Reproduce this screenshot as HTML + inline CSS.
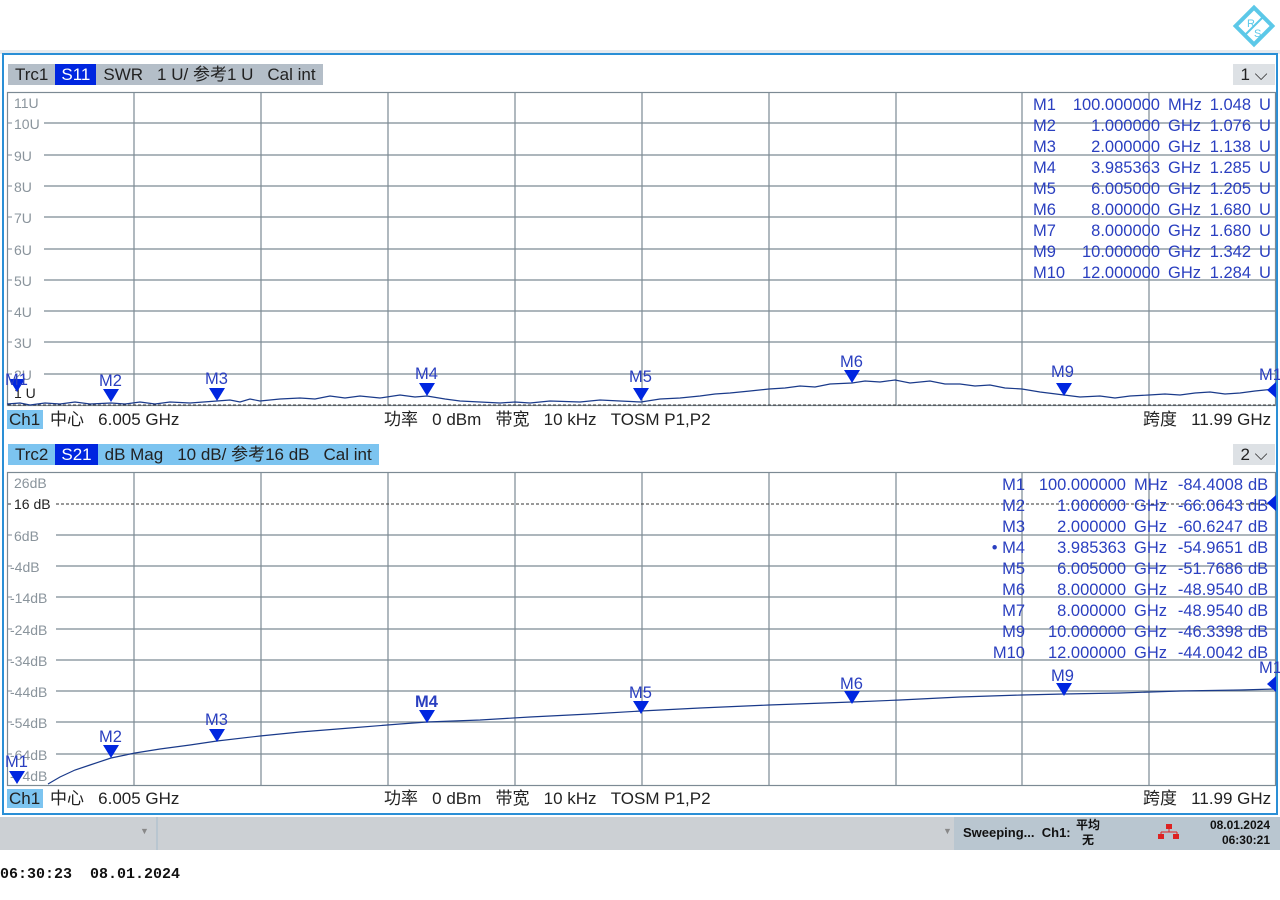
<!DOCTYPE html>
<html><head><meta charset="utf-8"><style>
body{margin:0;width:1280px;height:900px;background:#fff;font-family:"Liberation Sans","Noto Sans CJK SC",sans-serif;overflow:hidden;position:relative}
.a{position:absolute;white-space:nowrap}
.hdr{position:absolute;height:21px;font-size:17px;line-height:21px;color:#222}
.hdr span{display:inline-block;padding:0 7px}
.ch{position:absolute;left:7px;width:1268px;height:23px;font-size:17px;line-height:23px;color:#222}
.t{position:absolute;font-size:16.5px;color:#2a3fc0;line-height:21px;white-space:nowrap}
.r{text-align:right}
</style></head><body>
<svg class="a" style="left:1232px;top:4px" width="44" height="44" viewBox="0 0 44 44">
<rect x="9" y="9" width="26" height="26" transform="rotate(45 22 22)" fill="none" stroke="#5cc8e8" stroke-width="4"/>
<line x1="13" y1="31" x2="31" y2="13" stroke="#5cc8e8" stroke-width="2"/>
<text x="15" y="23" font-size="11" fill="#5cc8e8" font-family="Liberation Sans">R</text>
<text x="22" y="33" font-size="11" fill="#5cc8e8" font-family="Liberation Sans">S</text>
</svg>
<div class="a" style="left:0;top:50px;width:1280px;height:4px;background:#e6eaee"></div>
<div class="a" style="left:2px;top:53px;width:1272px;height:758px;border:2px solid #2a8fd6"></div>

<div class="hdr" style="left:8px;top:64px;background:#b4bec8"><span>Trc1</span><span style="background:#0026e0;color:#fff;padding:0 6px">S11</span><span>SWR</span><span>1 U/ 参考1 U</span><span>Cal int</span></div>
<div class="hdr" style="left:1233px;top:64px;width:42px;background:#dde1e5;text-align:center">1 ⌵</div>
<div class="hdr" style="left:8px;top:444px;background:#7cc4f0"><span>Trc2</span><span style="background:#0026e0;color:#fff;padding:0 6px">S21</span><span>dB Mag</span><span>10 dB/ 参考16 dB</span><span>Cal int</span></div>
<div class="hdr" style="left:1233px;top:444px;width:42px;background:#dde1e5;text-align:center">2 ⌵</div>

<svg class="a" style="left:0;top:0" width="1280" height="900">
<g stroke="#7c8a94" stroke-width="1.2" fill="none">
<rect x="7.5" y="92.5" width="1268" height="313"/>
<path d="M134 92V406M261 92V406M388 92V406M515 92V406M642 92V406M769 92V406M896 92V406M1022 92V406M1149 92V406"/>
<path d="M44 123H1275M44 155H1275M44 186H1275M44 217H1275M44 249H1275M44 280H1275M44 311H1275M44 342H1275M44 374H1275"/>
<rect x="7.5" y="472.5" width="1268" height="313"/>
<path d="M134 472V786M261 472V786M388 472V786M515 472V786M642 472V786M769 472V786M896 472V786M1022 472V786M1149 472V786"/>
<path d="M56 535H1275M56 566H1275M56 597H1275M56 629H1275M56 660H1275M56 691H1275M56 722H1275M56 754H1275"/>
</g>
<path d="M8 123H12M8 155H12M8 186H12M8 217H12M8 249H12M8 280H12M8 311H12M8 342H12M8 374H12M8 535H12M8 566H12M8 597H12M8 629H12M8 660H12M8 691H12M8 722H12M8 754H12" stroke="#7c8a94"/>
<path d="M8 405H1275" stroke="#333" stroke-dasharray="3 2"/>
<path d="M56 504H1275M8 504H12" stroke="#333" stroke-dasharray="3 2"/>
<g font-size="14" fill="#8a949c" font-family="Liberation Sans">
<text x="14" y="108">11U</text><text x="14" y="129">10U</text><text x="14" y="161">9U</text><text x="14" y="192">8U</text><text x="14" y="223">7U</text><text x="14" y="255">6U</text><text x="14" y="286">5U</text><text x="14" y="317">4U</text><text x="14" y="348">3U</text><text x="14" y="380">2U</text>
<text x="14" y="488">26dB</text><text x="14" y="541">6dB</text><text x="10" y="572">-4dB</text><text x="10" y="603">-14dB</text><text x="10" y="635">-24dB</text><text x="10" y="666">-34dB</text><text x="10" y="697">-44dB</text><text x="10" y="728">-54dB</text><text x="10" y="760">-64dB</text><text x="10" y="781">-74dB</text>
</g>
<text x="14" y="398" font-size="14" fill="#222">1 U</text>
<text x="14" y="509" font-size="14" fill="#222">16 dB</text>
<polyline fill="none" stroke="#1a3a8a" stroke-width="1.2" points="7,404 20,403 30,405 45,403 60,404 75,402 90,404 111,403 125,404 140,402 155,404 170,402 190,403 217,401 230,400 240,402 250,399 260,401 280,399 300,398 315,399 330,396 345,398 360,396 380,398 400,395 415,397 427,396 445,399 460,401 480,402 500,403 515,402 530,403 550,401 580,402 600,400 620,401 641,402 660,399 680,398 700,396 715,394 730,393 750,391 769,389 785,388 800,386 815,387 830,384 852,383 865,381 880,382 895,380 910,383 930,381 945,384 960,384 975,386 990,385 1005,388 1022,389 1040,392 1064,395 1080,397 1100,396 1115,398 1130,396 1149,395 1165,394 1180,395 1195,393 1210,392 1225,394 1240,393 1255,391 1275,389"/>
<polyline fill="none" stroke="#1a3a8a" stroke-width="1.2" points="48,784 60,777 75,770 90,765 111,758 135,753 160,749 190,745 217,741 260,736 300,732 350,728 400,724 427,722 480,720 530,717 590,714 641,711 700,708 769,705 852,702 900,700 960,697 1022,695 1064,694 1120,693 1180,691 1240,690 1275,689"/>
<g fill="#0026e0">
<path d="M9 379h16l-8 13z"/><path d="M103 389h16l-8 13z"/><path d="M209 388h16l-8 13z"/><path d="M419 383h16l-8 13z"/><path d="M633 388h16l-8 13z"/><path d="M844 370h16l-8 13z"/><path d="M1056 383h16l-8 13z"/><path d="M1276 382v16l-9-8z"/>
<path d="M9 771h16l-8 13z"/><path d="M103 745h16l-8 13z"/><path d="M209 729h16l-8 13z"/><path d="M419 710h16l-8 13z"/><path d="M633 701h16l-8 13z"/><path d="M844 691h16l-8 13z"/><path d="M1056 683h16l-8 13z"/><path d="M1276 676v16l-9-8z"/><path d="M1276 495v16l-9-8z"/>
</g>
<g font-size="16.5" fill="#2a3fc0" font-family="Liberation Sans">
<text x="5" y="385">M1</text><text x="99" y="386">M2</text><text x="205" y="384">M3</text><text x="415" y="379">M4</text><text x="629" y="382">M5</text><text x="840" y="367">M6</text><text x="1051" y="377">M9</text><text x="1259" y="380">M1</text>
<text x="5" y="767">M1</text><text x="99" y="742">M2</text><text x="205" y="725">M3</text><text x="415" y="707" font-weight="bold">M4</text><text x="629" y="698">M5</text><text x="840" y="689">M6</text><text x="1051" y="681">M9</text><text x="1259" y="673">M1</text>
</g>
</svg>

<div class="t" style="left:1033px;top:95px">M1<br>M2<br>M3<br>M4<br>M5<br>M6<br>M7<br>M9<br>M10</div>
<div class="t r" style="left:1060px;top:95px;width:100px">100.000000<br>1.000000<br>2.000000<br>3.985363<br>6.005000<br>8.000000<br>8.000000<br>10.000000<br>12.000000</div>
<div class="t" style="left:1168px;top:95px">MHz<br>GHz<br>GHz<br>GHz<br>GHz<br>GHz<br>GHz<br>GHz<br>GHz</div>
<div class="t r" style="left:1200px;top:95px;width:51px">1.048<br>1.076<br>1.138<br>1.285<br>1.205<br>1.680<br>1.680<br>1.342<br>1.284</div>
<div class="t" style="left:1259px;top:95px">U<br>U<br>U<br>U<br>U<br>U<br>U<br>U<br>U</div>

<div class="t r" style="left:975px;top:475px;width:50px">M1<br>M2<br>M3<br>• M4<br>M5<br>M6<br>M7<br>M9<br>M10</div>
<div class="t r" style="left:1026px;top:475px;width:100px">100.000000<br>1.000000<br>2.000000<br>3.985363<br>6.005000<br>8.000000<br>8.000000<br>10.000000<br>12.000000</div>
<div class="t" style="left:1134px;top:475px">MHz<br>GHz<br>GHz<br>GHz<br>GHz<br>GHz<br>GHz<br>GHz<br>GHz</div>
<div class="t r" style="left:1170px;top:475px;width:73px">-84.4008<br>-66.0643<br>-60.6247<br>-54.9651<br>-51.7686<br>-48.9540<br>-48.9540<br>-46.3398<br>-44.0042</div>
<div class="t" style="left:1248px;top:475px">dB<br>dB<br>dB<br>dB<br>dB<br>dB<br>dB<br>dB<br>dB</div>

<div class="ch" style="top:408px"><span style="background:#7cc4f0;padding:0 3px 0 2px">Ch1</span><span class="a" style="left:43px">中心&nbsp;&nbsp;&nbsp;6.005 GHz</span><span class="a" style="left:377px">功率&nbsp;&nbsp;&nbsp;0 dBm&nbsp;&nbsp;&nbsp;带宽&nbsp;&nbsp;&nbsp;10 kHz&nbsp;&nbsp;&nbsp;TOSM P1,P2</span><span class="a" style="left:1136px">跨度&nbsp;&nbsp;&nbsp;11.99 GHz</span></div>
<div class="ch" style="top:787px"><span style="background:#7cc4f0;padding:0 3px 0 2px">Ch1</span><span class="a" style="left:43px">中心&nbsp;&nbsp;&nbsp;6.005 GHz</span><span class="a" style="left:377px">功率&nbsp;&nbsp;&nbsp;0 dBm&nbsp;&nbsp;&nbsp;带宽&nbsp;&nbsp;&nbsp;10 kHz&nbsp;&nbsp;&nbsp;TOSM P1,P2</span><span class="a" style="left:1136px">跨度&nbsp;&nbsp;&nbsp;11.99 GHz</span></div>

<div class="a" style="left:0;top:817px;width:1280px;height:33px;background:#b9c6d0"></div>
<div class="a" style="left:0;top:817px;width:156px;height:33px;background:#ccd0d4"></div>
<div class="a" style="left:158px;top:817px;width:796px;height:33px;background:#ccd0d4"></div>
<div class="a" style="left:140px;top:826px;font-size:9px;color:#888">▼</div>
<div class="a" style="left:943px;top:826px;font-size:9px;color:#888">▼</div>
<div class="a" style="left:963px;top:825px;font-size:13px;font-weight:bold;color:#111">Sweeping...&nbsp;&nbsp;Ch1:</div>
<div class="a" style="left:1076px;top:818px;font-size:12px;font-weight:bold;color:#111;line-height:15px;text-align:center">平均<br>无</div>
<svg class="a" style="left:1158px;top:824px" width="22" height="16"><rect x="8" y="0" width="6" height="5" fill="#d22"/><path d="M11 5v3M3 8h16M3 8v3M19 8v3" stroke="#d22"/><rect x="0" y="10" width="6" height="5" fill="#d22"/><rect x="15" y="10" width="6" height="5" fill="#d22"/></svg>
<div class="a" style="left:1200px;top:818px;width:70px;font-size:12px;font-weight:bold;color:#111;line-height:15px;text-align:right">08.01.2024<br>06:30:21</div>
<div class="a" style="left:0;top:866px;font-family:'Liberation Mono',monospace;font-size:15px;font-weight:bold;color:#111">06:30:23&nbsp;&nbsp;08.01.2024</div>
</body></html>
